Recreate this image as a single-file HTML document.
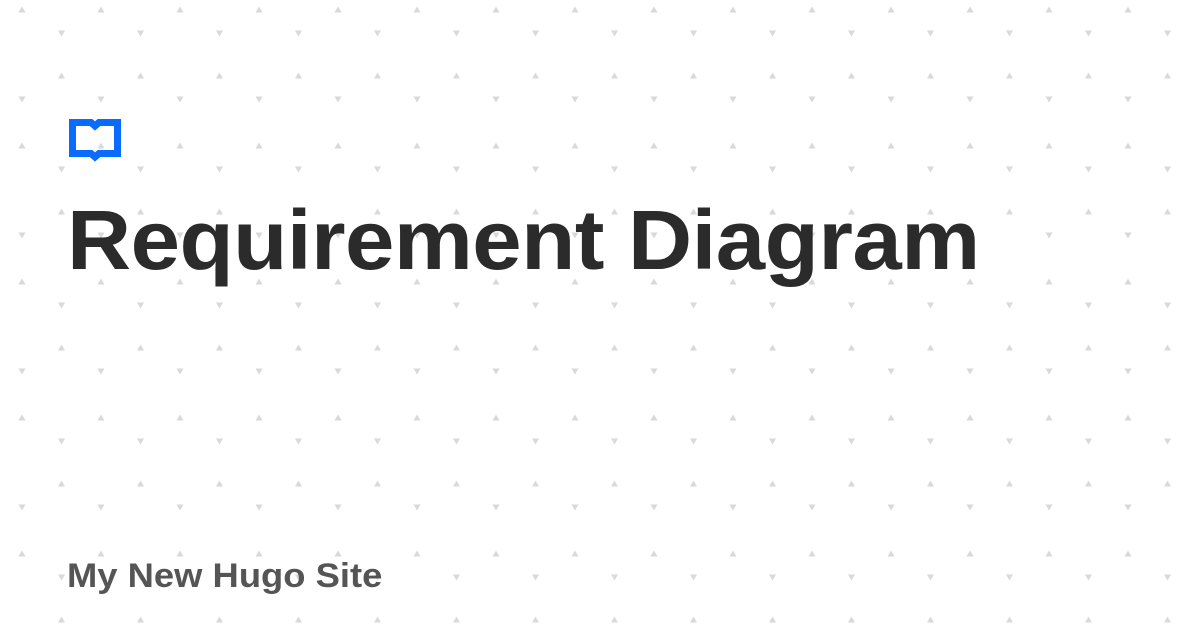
<!DOCTYPE html>
<html><head><meta charset="utf-8"><style>
html,body{margin:0;padding:0}
body{width:1200px;height:630px;overflow:hidden;background:#fff;position:relative;font-family:"Liberation Sans",sans-serif}
svg.bg{position:absolute;left:0;top:0}
.t{position:absolute;left:67px;top:192px;font-size:84px;font-weight:bold;color:#2b2b2b;line-height:96px;white-space:nowrap;letter-spacing:-0.5px;transform:scaleX(1.057);transform-origin:0 0}
.s{position:absolute;left:67px;top:556px;font-size:34px;font-weight:bold;color:#555;line-height:40px;white-space:nowrap;transform:scaleX(1.07);transform-origin:0 0}
</style></head><body>
<svg class="bg" width="1200" height="630">
<defs><pattern id="p" x="0" y="0" width="79" height="136" patternUnits="userSpaceOnUse">
<g fill="#d6d9de">
<path d="M22 6.5 L25.5 12.5 L18.5 12.5Z"/>
<path d="M18.5 96.5 L25.5 96.5 L22 102.5Z"/>
<path d="M58 30.5 L65 30.5 L61.5 36.5Z"/>
<path d="M61.5 72.5 L65 78.5 L58 78.5Z"/>
</g></pattern></defs>
<rect width="1200" height="630" fill="url(#p)"/>
</svg>
<svg style="position:absolute;left:0;top:0" width="200" height="200">
<path d="M72.5 122.5 H91 L95 126 L99 122.5 H117.5 V153.5 H99 L95 157 L91 153.5 H72.5 Z" fill="none" stroke="#0a6cff" stroke-width="7" stroke-linejoin="miter"/>
</svg>
<div class="t">Requirement Diagram</div>
<div class="s">My New Hugo Site</div>
</body></html>
